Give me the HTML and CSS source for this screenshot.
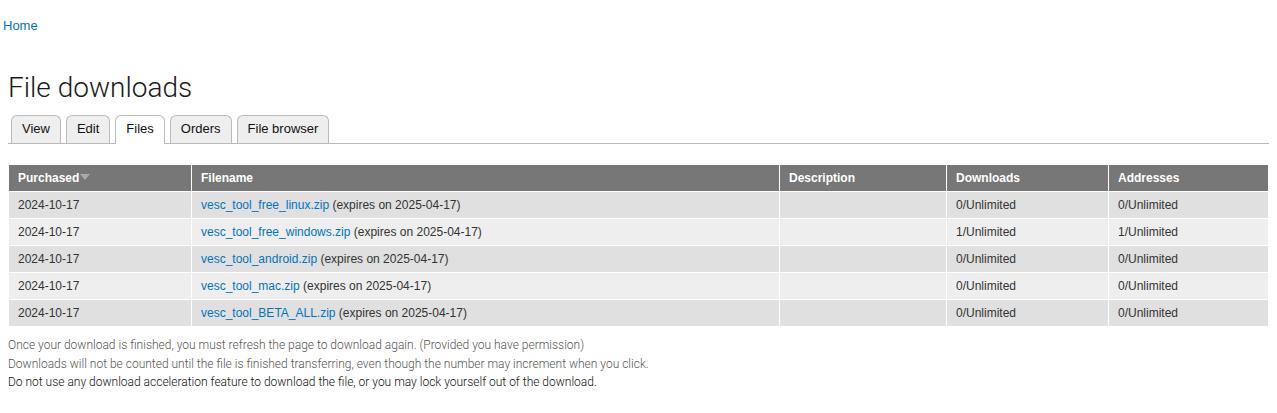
FILE: index.html
```html
<!DOCTYPE html>
<html>
<head>
<meta charset="utf-8">
<link rel="stylesheet" href="styles.css">
</head>
<body>
<div class="breadcrumb"><a href="#">Home</a></div>
<div class="page">
  <h1 class="title">File downloads</h1>
  <ul class="tabs">
    <li class="tab"><a href="#">View</a></li>
    <li class="tab"><a href="#">Edit</a></li>
    <li class="tab active"><a href="#">Files</a></li>
    <li class="tab"><a href="#">Orders</a></li>
    <li class="tab"><a href="#">File browser</a></li>
  </ul>
  <table class="files">
    <thead>
      <tr>
        <th class="c1">Purchased<span class="sort"></span></th>
        <th class="c2">Filename</th>
        <th class="c3">Description</th>
        <th class="c4">Downloads</th>
        <th class="c5">Addresses</th>
      </tr>
    </thead>
    <tbody>
      <tr class="odd"><td>2024-10-17</td><td><a href="#">vesc_tool_free_linux.zip</a> (expires on 2025-04-17)</td><td></td><td>0/Unlimited</td><td>0/Unlimited</td></tr>
      <tr class="even"><td>2024-10-17</td><td><a href="#">vesc_tool_free_windows.zip</a> (expires on 2025-04-17)</td><td></td><td>1/Unlimited</td><td>1/Unlimited</td></tr>
      <tr class="odd"><td>2024-10-17</td><td><a href="#">vesc_tool_android.zip</a> (expires on 2025-04-17)</td><td></td><td>0/Unlimited</td><td>0/Unlimited</td></tr>
      <tr class="even"><td>2024-10-17</td><td><a href="#">vesc_tool_mac.zip</a> (expires on 2025-04-17)</td><td></td><td>0/Unlimited</td><td>0/Unlimited</td></tr>
      <tr class="odd"><td>2024-10-17</td><td><a href="#">vesc_tool_BETA_ALL.zip</a> (expires on 2025-04-17)</td><td></td><td>0/Unlimited</td><td>0/Unlimited</td></tr>
    </tbody>
  </table>
  <div class="notes">
    <p class="note">Once your download is finished, you must refresh the page to download again. (Provided you have permission)</p>
    <p class="note">Downloads will not be counted until the file is finished transferring, even though the number may increment when you click.</p>
    <p class="note strong">Do not use any download acceleration feature to download the file, or you may lock yourself out of the download.</p>
  </div>
</div>
</body>
</html>
```
FILE: styles.css
```css
html, body {
  margin: 0;
  padding: 0;
  background: #fff;
}
body {
  font-family: "Liberation Sans", Arial, sans-serif;
  color: #333;
}
a {
  color: #0074bd;
  text-decoration: none;
}
.breadcrumb {
  padding: 18px 3px 0;
  font-size: 13px;
  line-height: 16px;
}
.page {
  padding: 0 8px;
}
.title {
  margin: 36px 0 0;
  font-family: Roboto, "Liberation Sans", sans-serif;
  font-weight: 300;
  font-size: 28px;
  line-height: 36px;
  color: #1a1a1a;
}
.tabs {
  list-style: none;
  margin: 9px 0 0;
  padding: 0 0 0 3px;
  display: flex;
  gap: 5px;
  border-bottom: 1px solid #bbb;
  height: 28px;
  align-items: flex-end;
}
.tab {
  height: 28px;
  box-sizing: border-box;
  border: 1px solid #bbb;
  border-bottom: none;
  border-radius: 6px 6px 0 0;
  background: #eee;
}
.tab a {
  display: block;
  padding: 0 10px;
  line-height: 26px;
  font-size: 13px;
  color: #111;
}
.tab.active {
  background: #fff;
  height: 29px;
  margin-bottom: -1px;
}
.files {
  margin-top: 20px;
  width: 100%;
  border-collapse: collapse;
  font-size: 12px;
}
.files th, .files td {
  border: 1px solid #fff;
  text-align: left;
  padding: 0 9px;
  height: 27px;
  box-sizing: border-box;
}
.files th {
  background: #777;
  color: #fff;
  font-weight: bold;
  height: 27px;
}
.files tr.odd td { background: #e0e0e0; }
.files tr.even td { background: #eee; }
.files .c1 { width: 183px; }
.files .c2 { width: 588px; }
.files .c3 { width: 167px; }
.files .c4 { width: 162px; }
.sort {
  display: inline-block;
  width: 0;
  height: 0;
  border-left: 5px solid transparent;
  border-right: 5px solid transparent;
  border-top: 6px solid #aaa;
  margin-left: 1px;
  vertical-align: 2px;
}
.notes {
  margin-top: 9px;
}
.note {
  margin: 0;
  font-family: Roboto, "Liberation Sans", sans-serif;
  font-size: 12px;
  line-height: 18.5px;
  font-weight: 300;
  color: #555;
}
.note.strong {
  color: #111;
}
```
